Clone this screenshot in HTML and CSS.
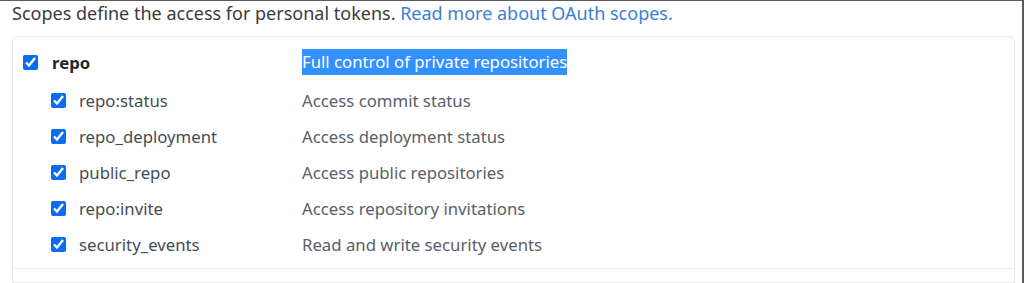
FILE: index.html
```html
<!DOCTYPE html>
<html lang="en">
<head>
    <meta charset="UTF-8">
    <title>Token scopes</title>
    <link rel="stylesheet" href="styles.css">
</head>
<body>
    <div class="frame">
        <p class="intro">Scopes define the access for personal tokens. <a href="#">Read more about OAuth scopes.</a></p>

        <div class="scopes">
            <div class="group">
                <label class="row parent">
                    <span class="name"><input type="checkbox" checked> repo</span>
                    <span class="desc"><span class="selected">Full control of private repositories</span></span>
                </label>
                <label class="row child">
                    <span class="name"><input type="checkbox" checked> repo:status</span>
                    <span class="desc">Access commit status</span>
                </label>
                <label class="row child">
                    <span class="name"><input type="checkbox" checked> repo_deployment</span>
                    <span class="desc">Access deployment status</span>
                </label>
                <label class="row child">
                    <span class="name"><input type="checkbox" checked> public_repo</span>
                    <span class="desc">Access public repositories</span>
                </label>
                <label class="row child">
                    <span class="name"><input type="checkbox" checked> repo:invite</span>
                    <span class="desc">Access repository invitations</span>
                </label>
                <label class="row child">
                    <span class="name"><input type="checkbox" checked> security_events</span>
                    <span class="desc">Read and write security events</span>
                </label>
            </div>
            <div class="group next"></div>
        </div>
    </div>
</body>
</html>
```

FILE: styles.css
```css
body {
    margin: 0;
    padding: 0;
    background: #fff;
    font-family: 'Noto Sans', 'Open Sans', sans-serif;
    font-size: 16.75px;
    color: #24292e;
    overflow: hidden;
}
.frame {
    height: 282px;
    overflow: hidden;
    border-top: 1px solid #5a5a5a;
    border-right: 2px solid #5a5a5a;
    padding: 0 7px 0 12px;
}
.intro {
    margin: 0;
    height: 35px;
    font-size: 18px;
    line-height: 24px;
    color: #3b3b3b;
}
.intro a {
    color: #3a7fd5;
    text-decoration: none;
}
.scopes {
    border: 1px solid #e8eaed;
    border-radius: 6px;
    height: 260px;
}
.group {
    padding: 7px 0 6px;
    border-bottom: 1px solid #e8eaed;
}
.row {
    display: flex;
    align-items: center;
    height: 36px;
}
.row.parent {
    margin-bottom: 2px;
}
.name {
    display: flex;
    align-items: center;
    gap: 13px;
    color: #444d56;
}
.parent .name {
    width: 279px;
    padding-left: 10px;
    gap: 14px;
    font-weight: bold;
    color: #24292e;
}
.child .name {
    width: 251px;
    padding-left: 38px;
}
.name input {
    width: 15px;
    height: 15px;
    margin: 0;
    accent-color: #0b6cf0;
}
.desc {
    color: #586069;
}
.selected {
    display: inline-block;
    background: #3390ff;
    color: #fff;
    line-height: 26px;
}
```
